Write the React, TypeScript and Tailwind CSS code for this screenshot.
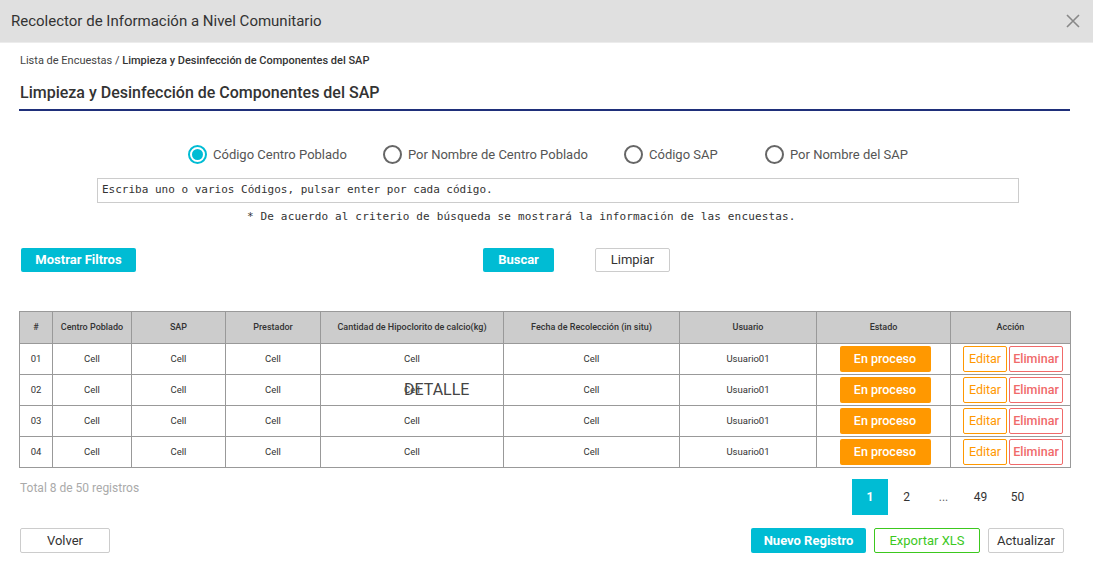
import React from "react";

const columns = [
  { label: "#", w: "w-[33px]" },
  { label: "Centro Poblado", w: "w-[79px]" },
  { label: "SAP", w: "w-[94px]" },
  { label: "Prestador", w: "w-[95px]" },
  { label: "Cantidad de Hipoclorito de calcio(kg)", w: "w-[183px]" },
  { label: "Fecha de Recolección (in situ)", w: "w-[176px]" },
  { label: "Usuario", w: "w-[137px]" },
  { label: "Estado", w: "w-[134px]" },
  { label: "Acción", w: "w-[120px]" },
];

const rows = ["01", "02", "03", "04"];

const Radio = ({ label, checked, w }: { label: string; checked?: boolean; w?: string }) => (
  <label className={`flex items-center gap-[6px] ${w ?? ""}`}>
    <span
      className={`flex h-[19px] w-[19px] items-center justify-center rounded-full border-2 ${
        checked ? "border-[#00bcd4]" : "border-[#666]"
      }`}
    >
      {checked && <span className="h-[11px] w-[11px] rounded-full bg-[#00bcd4]" />}
    </span>
    <span className="text-[13px] text-[#555]">{label}</span>
  </label>
);

export default function App() {
  return (
    <div className="h-[577px] w-full overflow-hidden bg-white font-['Roboto',sans-serif] text-[#333]">
      {/* modal header */}
      <div className="flex h-[43px] items-center justify-between border-b border-[#ececec] bg-[#e0e0e0] pl-[11px] pr-[13px]">
        <h1 className="text-[15px] text-[#333]">Recolector de Información a Nivel Comunitario</h1>
        <svg width="14" height="14" viewBox="0 0 14 14" className="text-[#888]">
          <path d="M1 1L13 13M13 1L1 13" stroke="currentColor" strokeWidth="1.6" />
        </svg>
      </div>

      <div className="pl-[19px] pr-[23px]">
        <div className="mt-[10px] h-[16px] pl-[1px] text-[11px] leading-[16px] text-[#444]">
          Lista de Encuestas / <span className="font-medium text-[#333]">Limpieza y Desinfección de Componentes del SAP</span>
        </div>
        <div className="mt-[14px] border-b-2 border-[#1f2f7a] pb-[6px] pl-[1px] text-[16px] font-medium leading-[20px] text-[#333]">
          Limpieza y Desinfección de Componentes del SAP
        </div>

        <div className="ml-[169px] mt-[34px] flex h-[19px]">
          <Radio label="Código Centro Poblado" checked w="w-[195px]" />
          <Radio label="Por Nombre de Centro Poblado" w="w-[241px]" />
          <Radio label="Código SAP" w="w-[141px]" />
          <Radio label="Por Nombre del SAP" />
        </div>

        <div className="ml-[78px] mt-[14px] flex h-[25px] w-[922px] items-center border border-[#ccc] px-[4px] font-['DejaVu_Sans_Mono',monospace] text-[11px] text-[#333]">
          Escriba uno o varios Códigos, pulsar enter por cada código.
        </div>
        <div className="mt-[7px] pl-[228px] font-['DejaVu_Sans_Mono',monospace] text-[11px] leading-[14px] tracking-[0.15px] text-[#333]">
          * De acuerdo al criterio de búsqueda se mostrará la información de las encuestas.
        </div>

        <div className="mt-[24px] flex h-[24px] items-center">
          <button className="ml-[2px] h-[24px] w-[115px] rounded-[2px] bg-[#00bcd4] text-[13px] font-bold text-white">
            Mostrar Filtros
          </button>
          <button className="ml-[347px] h-[24px] w-[71px] rounded-[2px] bg-[#00bcd4] text-[13px] font-bold text-white">
            Buscar
          </button>
          <button className="ml-[41px] h-[24px] w-[75px] rounded-[2px] border border-[#ccc] bg-white text-[13px] text-[#333]">
            Limpiar
          </button>
        </div>

        <div className="relative mt-[39px]">
          <table className="w-[1051px] table-fixed border-collapse text-[9.5px]">
            <thead>
              <tr className="h-[32px] bg-[#cccccc]">
                {columns.map((c) => (
                  <th key={c.label} className={`${c.w} border border-[#999] text-[9px] font-medium text-[#333]`}>
                    {c.label}
                  </th>
                ))}
              </tr>
            </thead>
            <tbody>
              {rows.map((r) => (
                <tr key={r} className="h-[31px] text-center text-[#333]">
                  <td className="border border-[#999]">{r}</td>
                  <td className="border border-[#999]">Cell</td>
                  <td className="border border-[#999]">Cell</td>
                  <td className="border border-[#999]">Cell</td>
                  <td className="border border-[#999]">Cell</td>
                  <td className="border border-[#999]">Cell</td>
                  <td className="border border-[#999]">Usuario01</td>
                  <td className="border border-[#999]">
                    <div className="flex justify-center pl-[3px]">
                      <span className="flex h-[26px] w-[91px] items-center justify-center rounded-[2px] bg-[#ff9800] text-[12.5px] font-medium text-white">
                        En proceso
                      </span>
                    </div>
                  </td>
                  <td className="border border-[#999]">
                    <div className="flex justify-center gap-[2px] pl-[5px]">
                      <span className="flex h-[26px] w-[44px] items-center justify-center rounded-[2px] border border-[#ff9800] text-[12.5px] text-[#ff9800]">
                        Editar
                      </span>
                      <span className="flex h-[26px] w-[54px] items-center justify-center rounded-[2px] border border-[#f06a6a] text-[12.5px] font-medium text-[#f06a6a]">
                        Eliminar
                      </span>
                    </div>
                  </td>
                </tr>
              ))}
            </tbody>
          </table>
          <span className="absolute left-[385px] top-[69px] text-[16px] leading-[20px] text-[#444]">DETALLE</span>
        </div>

        <div className="mt-[11px] flex h-[36px] items-start justify-between">
          <span className="pl-[1px] text-[12px] leading-[18px] text-[#aaa]">Total 8 de 50 registros</span>
          <div className="mr-[34px] flex text-[12px] text-[#333]">
            <span className="flex h-[36px] w-[36px] items-center justify-center bg-[#00bcd4] font-bold text-white">1</span>
            <span className="flex h-[36px] w-[37px] items-center justify-center">2</span>
            <span className="flex h-[36px] w-[37px] items-center justify-center text-[#666]">...</span>
            <span className="flex h-[36px] w-[37px] items-center justify-center">49</span>
            <span className="flex h-[36px] w-[37px] items-center justify-center">50</span>
          </div>
        </div>

        <div className="mt-[13px] flex h-[25px] items-center justify-between">
          <button className="ml-[1px] h-[25px] w-[90px] rounded-[2px] border border-[#ccc] bg-white text-[13px] text-[#333]">
            Volver
          </button>
          <div className="mr-[6px] flex gap-[8px]">
            <button className="h-[25px] w-[115px] rounded-[2px] bg-[#00bcd4] text-[13px] font-bold text-white">
              Nuevo Registro
            </button>
            <button className="h-[25px] w-[106px] rounded-[2px] border border-[#3cc81e] bg-white text-[13px] text-[#3cc81e]">
              Exportar XLS
            </button>
            <button className="h-[25px] w-[76px] rounded-[2px] border border-[#ccc] bg-white text-[13px] text-[#333]">
              Actualizar
            </button>
          </div>
        </div>
      </div>
    </div>
  );
}
